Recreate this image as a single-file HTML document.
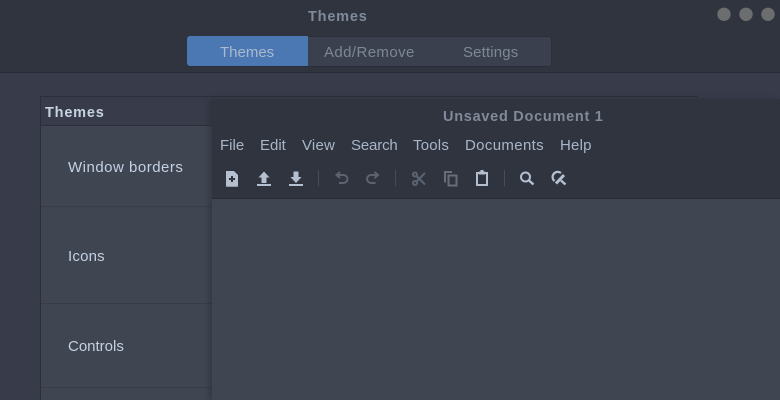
<!DOCTYPE html>
<html><head><meta charset="utf-8">
<style>
html,body{margin:0;padding:0;width:780px;height:400px;overflow:hidden;background:#383c4a}
body{position:relative;font-family:"Liberation Sans","Noto Sans CJK SC",sans-serif;font-size:15px}
div{position:absolute;box-sizing:border-box}
.t{white-space:nowrap;line-height:20px;height:20px}
.b{font-weight:bold;font-size:14.5px}
svg{position:absolute;left:0;top:0}
</style></head><body>
<div style="left:0;top:0;width:780px;height:73px;background:#2f343f;border-bottom:1px solid #262a33"></div>
<div class="t b" style="left:308px;top:7px;color:#818a99;letter-spacing:.8px">Themes</div>

<div style="left:187px;top:36px;width:365px;height:31px;background:#3a404e;border:1px solid #2b2f3a;border-radius:3px"></div>
<div style="left:187px;top:36px;width:121px;height:30px;background:#4b78b3;border-radius:3px 0 0 3px"></div>
<div class="t" style="left:220px;top:43px;color:#a9b9cf">Themes</div>
<div class="t" style="left:324px;top:43px;color:#7e8796;letter-spacing:.4px">Add/Remove</div>
<div class="t" style="left:463px;top:43px;color:#7e8796;letter-spacing:.15px">Settings</div>

<div style="left:40px;top:96px;width:658px;height:304px;border-top:1px solid #2b2f3a;border-left:1px solid #2b2f3a"></div>
<div style="left:41px;top:125px;width:175px;height:1px;background:#2b2f3a"></div>
<div style="left:41px;top:126px;width:175px;height:274px;background:#404552"></div>
<div style="left:41px;top:206px;width:175px;height:1px;background:#383c49"></div>
<div style="left:41px;top:303px;width:175px;height:1px;background:#383c49"></div>
<div style="left:41px;top:387px;width:175px;height:1px;background:#383c49"></div>
<div class="t b" style="left:45px;top:103px;color:#c6d3e2;letter-spacing:.8px">Themes</div>
<div class="t" style="left:68px;top:158px;color:#c3d1e2;letter-spacing:.5px">Window borders</div>
<div class="t" style="left:68px;top:247px;color:#c3d1e2;letter-spacing:.2px">Icons</div>
<div class="t" style="left:68px;top:337px;color:#c3d1e2">Controls</div>

<div style="left:212px;top:99px;width:568px;height:301px;background:#404552;box-shadow:-3px 0 5px rgba(30,33,42,.35)"></div>
<div style="left:212px;top:99px;width:568px;height:100px;background:#2f343f;border-bottom:1px solid #262a33"></div>
<div class="t b" style="left:443px;top:107px;color:#818a99;letter-spacing:.73px">Unsaved Document 1</div>
<div class="t" style="left:220px;top:136px;color:#a9b6c8">File</div>
<div class="t" style="left:260px;top:136px;color:#a9b6c8">Edit</div>
<div class="t" style="left:302px;top:136px;color:#a9b6c8;letter-spacing:.2px">View</div>
<div class="t" style="left:351px;top:136px;color:#a9b6c8;letter-spacing:-.15px">Search</div>
<div class="t" style="left:413px;top:136px;color:#a9b6c8;letter-spacing:.2px">Tools</div>
<div class="t" style="left:465px;top:136px;color:#a9b6c8;letter-spacing:.35px">Documents</div>
<div class="t" style="left:560px;top:136px;color:#a9b6c8;letter-spacing:.2px">Help</div>

<svg width="780" height="400" viewBox="0 0 780 400">
<!-- window dots -->
<circle cx="724" cy="14.300" r="6.700" fill="#6b6d6f"/>
<circle cx="746" cy="14.300" r="6.700" fill="#6b6d6f"/>
<circle cx="768" cy="14.300" r="6.700" fill="#6b6d6f"/>
<!-- new -->
<path d="M226 171h8l4 4v11a.8.8 0 0 1-.8.8h-10.400a.8.8 0 0 1-.8-.8z" fill="#b4bfd0"/>
<path d="M229 179h6M232 176v6" stroke="#2f343f" stroke-width="2" fill="none"/>
<!-- open -->
<path d="M264 171.500l5.500 6h-3v5.500h-5v-5.500h-3z" fill="#b4bfd0"/>
<rect x="257" y="184" width="14" height="2" fill="#b4bfd0"/>
<!-- save -->
<path d="M296 183l-5.500-6h3v-5.500h5v5.500h3z" fill="#b4bfd0"/>
<rect x="289" y="184" width="14" height="2" fill="#b4bfd0"/>
<rect x="318" y="170" width="1" height="16" fill="#474c59"/>
<!-- undo -->
<path d="M337 175h6.500a4 4 0 0 1 0 8h-4.500" stroke="#5c6370" stroke-width="2" fill="none"/>
<path d="M340 172l-3.500 3 3.500 3" stroke="#5c6370" stroke-width="2" fill="none"/>
<!-- redo -->
<path d="M377.500 175h-6.500a4 4 0 0 0 0 8h4.500" stroke="#5c6370" stroke-width="2" fill="none"/>
<path d="M374.500 172l3.500 3-3.500 3" stroke="#5c6370" stroke-width="2" fill="none"/>
<rect x="395" y="170" width="1" height="16" fill="#474c59"/>
<!-- cut -->
<g stroke="#5c6370" fill="none" stroke-width="2">
<circle cx="415" cy="174.500" r="2"/><circle cx="415" cy="183" r="2"/>
<path d="M416.500 176l8.500 8.500M416.500 181.500l8.500-8.500"/>
</g>
<!-- copy -->
<path d="M452 172h-7v10.500" stroke="#676d7a" stroke-width="2" fill="none"/>
<path d="M448.500 175.500h8v10h-8z" stroke="#676d7a" stroke-width="2" fill="none"/>
<!-- paste -->
<path d="M479.500 173h-2.500v12h10v-12h-2.500" stroke="#b4bfd0" stroke-width="2" fill="none"/>
<rect x="479" y="171.500" width="6" height="3" fill="#b4bfd0"/>
<rect x="480.500" y="170" width="3" height="2" fill="#b4bfd0"/>
<rect x="504" y="170" width="1" height="16" fill="#474c59"/>
<!-- find -->
<circle cx="525.500" cy="177" r="4.500" stroke="#b4bfd0" stroke-width="2" fill="none"/>
<path d="M529 180.500l4.500 4" stroke="#b4bfd0" stroke-width="2.400" fill="none"/>
<!-- replace -->
<path d="M554.500 181a5 5 0 0 1 6.500-8" stroke="#b4bfd0" stroke-width="2.200" fill="none"/>
<path d="M556 183.500l8-8.500" stroke="#b4bfd0" stroke-width="3" fill="none"/>
<path d="M561 180.500l4.500 4" stroke="#b4bfd0" stroke-width="2.400" fill="none"/>
</svg>
</body></html>
